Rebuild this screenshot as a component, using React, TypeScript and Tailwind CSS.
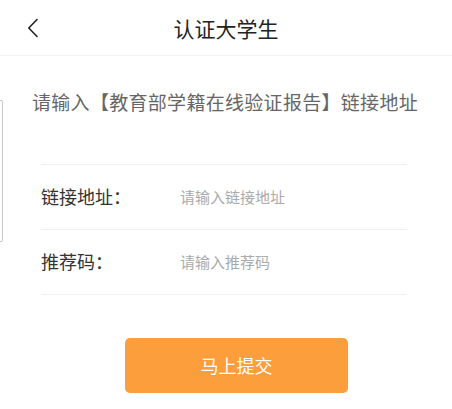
import { useState } from 'react';

const font = { fontFamily: '"Noto Sans CJK SC", "Noto Sans", sans-serif' };

function BackIcon() {
  return (
    <svg width="12" height="20" viewBox="0 0 12 20" fill="none">
      <path d="M10 1.5L1.8 10L10 18.5" stroke="#222" strokeWidth="1.6" strokeLinecap="round" strokeLinejoin="round" />
    </svg>
  );
}

function Field({ label, placeholder, value, onChange }: { label: string; placeholder: string; value: string; onChange: (v: string) => void }) {
  return (
    <div className="flex h-[65px] items-center border-b border-[#f0f0f0]">
      <span className="w-[139px] shrink-0 pb-[3px] text-[18px] leading-none text-[#333]">{label}</span>
      <input
        className="min-w-0 flex-1 bg-transparent text-[15px] text-[#333] outline-none placeholder:text-[#aaa]"
        style={font}
        placeholder={placeholder}
        value={value}
        onChange={(e) => onChange(e.target.value)}
      />
    </div>
  );
}

export default function App() {
  const [link, setLink] = useState('');
  const [code, setCode] = useState('');

  return (
    <div className="relative h-[409px] w-[452px] overflow-hidden bg-white" style={font}>
      <div className="grid h-[56px] grid-cols-[1fr_auto_1fr] items-center border-b border-[#f3f3f3]">
        <button className="ml-[27px] flex w-fit items-center pt-[1px]">
          <BackIcon />
        </button>
        <h1 className="pt-[1px] text-[21px] leading-none text-[#222]">认证大学生</h1>
        <div />
      </div>

      <p className="mt-[32px] pl-[32px] text-[19px] leading-[28px] tracking-[0.3px] text-[#666]">
        请输入【教育部学籍在线验证报告】链接地址
      </p>

      <div className="ml-[41px] mt-[48px] w-[366px] border-t border-[#f0f0f0]">
        <Field label="链接地址：" placeholder="请输入链接地址" value={link} onChange={setLink} />
        <Field label="推荐码：" placeholder="请输入推荐码" value={code} onChange={setCode} />
      </div>

      <button className="ml-[125px] mt-[43px] flex h-[55px] w-[223px] items-center justify-center rounded-[5px] bg-[#fb9e3b] text-[18px] text-white">
        马上提交
      </button>

      <div className="absolute left-0 top-[100px] h-[142px] w-[3px] rounded-r-[2px] border border-l-0 border-[#c8c8c8]" />
    </div>
  );
}
